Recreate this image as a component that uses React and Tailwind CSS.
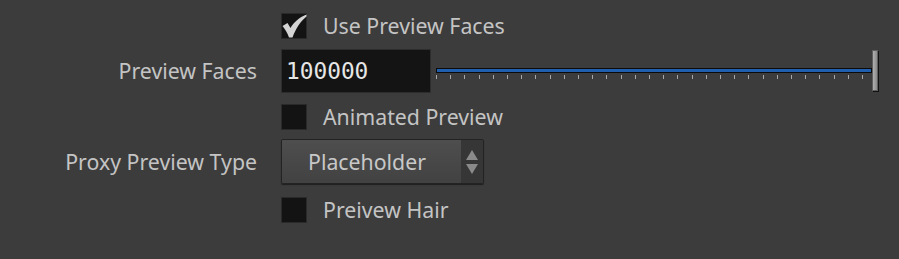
import React from "react";

const font = { fontFamily: '"Noto Sans", "Open Sans", sans-serif' };

const Checkbox = ({ checked }) => (
    <div className="w-[26px] h-[26px] bg-[#131313] border border-[#2a2a2a] shrink-0 relative">
        {checked && (
            <svg width="26" height="26" viewBox="0 0 26 26" className="absolute -left-px -top-px">
                <path d="M1.5 13 L6.5 10 L9.5 15 C13 9 18 4.5 25.5 1.5 L25.5 3.5 C19.5 8.5 15 15 11.5 24.5 L8 24.5 C6.5 20 4 16 1.5 13 Z" fill="#d4d4d4" />
            </svg>
        )}
    </div>
);

const Row = ({ label, children, h, mt }) => (
    <div className={`flex items-center ${h} ${mt}`}>
        <div className="w-[257px] text-right text-[21.3px] text-[#c4c4c4] leading-none whitespace-nowrap">{label}</div>
        <div className="ml-[24px] flex items-center flex-1 h-full">{children}</div>
    </div>
);

const Slider = () => {
    const ticks = Array.from({ length: 31 }, (_, i) => i);
    return (
        <div className="relative flex-1 h-full ml-[5px] mr-[21px]">
            <div className="absolute left-0 right-[6px] top-[19px] h-[5px] bg-[#0b0b0b] flex items-center">
                <div className="h-[3px] w-full bg-[#1f5fae] mx-px" />
            </div>
            {ticks.map((t) => (
                <div key={t} className="absolute top-[26px] w-px h-[4px] bg-[#a8a8a8]" style={{ left: t * 14.2 }} />
            ))}
            <div className="absolute right-0 top-px w-[6px] h-[41px] bg-gradient-to-r from-[#b0b0b0] to-[#8a8a8a] border border-[#5e5e5e] shadow-[1px_1px_0_#111]" />
        </div>
    );
};

export default function App() {
    return (
        <div className="w-[899px] h-[259px] bg-[#3c3c3c] pt-[13px]" style={font}>
            <Row label="" h="h-[26px]" mt="">
                <Checkbox checked />
                <span className="ml-[16px] text-[21.3px] text-[#c4c4c4] leading-none">Use Preview Faces</span>
            </Row>
            <Row label="Preview Faces" h="h-[44px]" mt="mt-[10px]">
                <div className="w-[150px] h-full bg-[#141414] border border-[#2d2d2d] flex items-center pl-[4px] text-[22.8px] text-[#e6e6e6]" style={{ fontFamily: '"DejaVu Sans Mono", monospace' }}>
                    100000
                </div>
                <Slider />
            </Row>
            <Row label="" h="h-[26px]" mt="mt-[11px]">
                <Checkbox />
                <span className="ml-[16px] text-[21.3px] text-[#c4c4c4] leading-none">Animated Preview</span>
            </Row>
            <Row label="Proxy Preview Type" h="h-[45px]" mt="mt-[9px]">
                <div className="w-[203px] h-full flex border border-[#232323] rounded-[2px] shadow-[0_1px_1px_#1e1e1e] overflow-hidden">
                    <div className="flex-1 flex items-center pl-[26px] bg-gradient-to-b from-[#4e4e4e] to-[#424242] text-[21.3px] text-[#c8c8c8] leading-none">Placeholder</div>
                    <div className="w-[22px] bg-[#363636] flex flex-col items-center justify-center gap-[4px]">
                        <svg width="12" height="10" viewBox="0 0 12 10"><path d="M6 0 L12 10 L0 10 Z" fill="#8a8a8a" /></svg>
                        <svg width="12" height="10" viewBox="0 0 12 10"><path d="M0 0 L12 0 L6 10 Z" fill="#8a8a8a" /></svg>
                    </div>
                </div>
            </Row>
            <Row label="" h="h-[26px]" mt="mt-[13px]">
                <Checkbox />
                <span className="ml-[16px] text-[21.3px] text-[#c4c4c4] leading-none">Preivew Hair</span>
            </Row>
        </div>
    );
}
